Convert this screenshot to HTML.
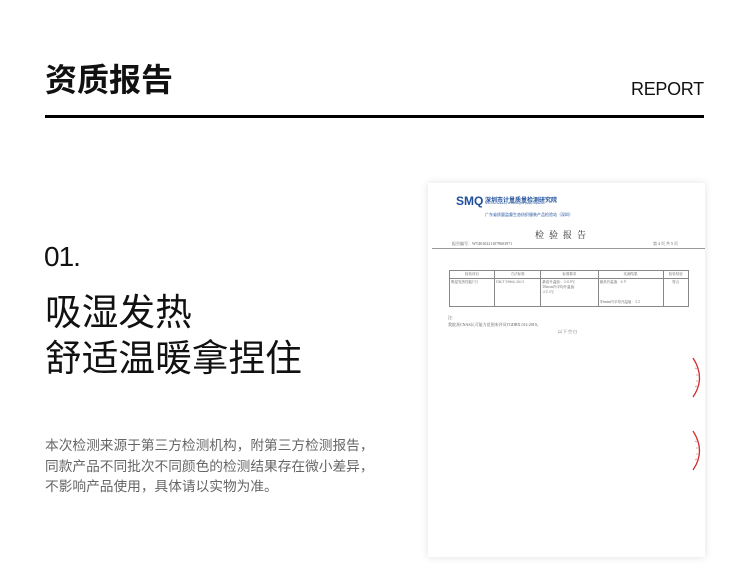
<!DOCTYPE html>
<html><head><meta charset="utf-8"><style>
*{margin:0;padding:0;box-sizing:border-box}
body{width:750px;height:587px;background:#fff;position:relative;overflow:hidden;font-family:"Liberation Sans","Noto Sans CJK SC",sans-serif;color:#111}
.a{position:absolute;white-space:nowrap}
.doc{position:absolute;left:428px;top:183px;width:277px;height:374px;background:#fff;box-shadow:0 0 8px rgba(0,0,0,.12);overflow:hidden}
.s{font-family:"Liberation Serif","Noto Serif CJK SC",serif;color:#555;font-size:4px;position:absolute;white-space:nowrap}
table{border-collapse:collapse;position:absolute;left:21px;top:87px;width:240px;font-size:3.5px;font-family:"Noto Serif CJK SC",serif;color:#555}
td{border:0.7px solid #888;padding:1px;vertical-align:top;text-align:left}
</style></head><body>
<div class="a" style="left:45px;top:60px;font-size:32px;font-weight:bold;line-height:40px">资质报告</div>
<div class="a" style="left:631px;top:78px;font-size:18px;line-height:22px;letter-spacing:-0.3px">REPORT</div>
<div class="a" style="left:45px;top:115px;width:659px;height:2.5px;background:#000"></div>
<div class="a" style="left:44px;top:240px;font-size:28px;line-height:34px;letter-spacing:-1px">01.</div>
<div class="a" style="left:45px;top:290px;font-size:36.7px;line-height:46px">吸湿发热<br>舒适温暖拿捏住</div>
<div class="a" style="left:45px;top:436px;font-size:13.7px;line-height:20.5px;color:#666">本次检测来源于第三方检测机构，附第三方检测报告，<br>同款产品不同批次不同颜色的检测结果存在微小差异，<br>不影响产品使用，具体请以实物为准。</div>
<div class="doc">
 <div class="a" style="left:28px;top:11px;font-size:12px;font-weight:bold;color:#1f4f9c;font-family:'Liberation Sans',sans-serif">SMQ</div>
 <div class="a" style="left:57px;top:12px;font-size:6px;font-weight:bold;color:#1f4f9c">深圳市计量质量检测研究院</div>
 <div class="a" style="left:57px;top:19px;font-size:2.5px;color:#1f4f9c">Shenzhen Academy of Metrology &amp; Quality Inspection</div>
 <div class="a" style="left:57px;top:29px;font-size:4px;color:#1f4f9c">广东省质量监督生态纺织服装产品检验站（深圳）</div>
 <div class="a" style="left:107px;top:45px;font-size:9px;color:#222;letter-spacing:5px;font-family:'Noto Serif CJK SC',serif">检验报告</div>
 <div class="s" style="left:24px;top:58px">报告编号：WT40102211079603971</div>
 <div class="s" style="left:225px;top:58px">第 4 页 共 5 页</div>
 <div class="a" style="left:4px;top:65px;width:273px;height:1px;background:#999"></div>
 <table>
  <tr><td style="text-align:center">检验项目</td><td style="text-align:center">方法标准</td><td style="text-align:center">标准要求</td><td style="text-align:center">实测结果</td><td style="text-align:center">检验结论</td></tr>
  <tr style="height:28px"><td>吸湿发热性能(℃)</td><td>GB/T 29866-2013</td><td>最高升温值：≥4.0℃<br>30min内平均升温值：<br>≥2.5℃</td><td>最高升温值：6.9<br><br><br><br>30min内平均升温值：3.2</td><td style="text-align:center">符合</td></tr>
 </table>
 <div class="s" style="left:20px;top:132px">注：</div>
 <div class="s" style="left:20px;top:139px">我院获CNAS认可能力范围来评员TGDBX 012-2019。</div>
 <div class="s" style="left:130px;top:146px">以 下 空 白</div>
 <svg class="a" style="left:260px;top:170px" width="17" height="120" viewBox="0 0 17 120">
  <path d="M5 5 Q18 25 5 44" fill="none" stroke="#d42a2a" stroke-width="1.3"/>
  <path d="M7 15 L9 16 M8 22 L10 22 M8 28 L10 28 M7 34 L9 33" stroke="#d88" stroke-width="0.8"/>
  <path d="M5 78 Q18 98 5 117" fill="none" stroke="#d42a2a" stroke-width="1.3"/>
  <path d="M7 88 L9 89 M8 95 L10 95 M8 101 L10 101 M7 107 L9 106" stroke="#d88" stroke-width="0.8"/>
 </svg>
</div>
</body></html>
